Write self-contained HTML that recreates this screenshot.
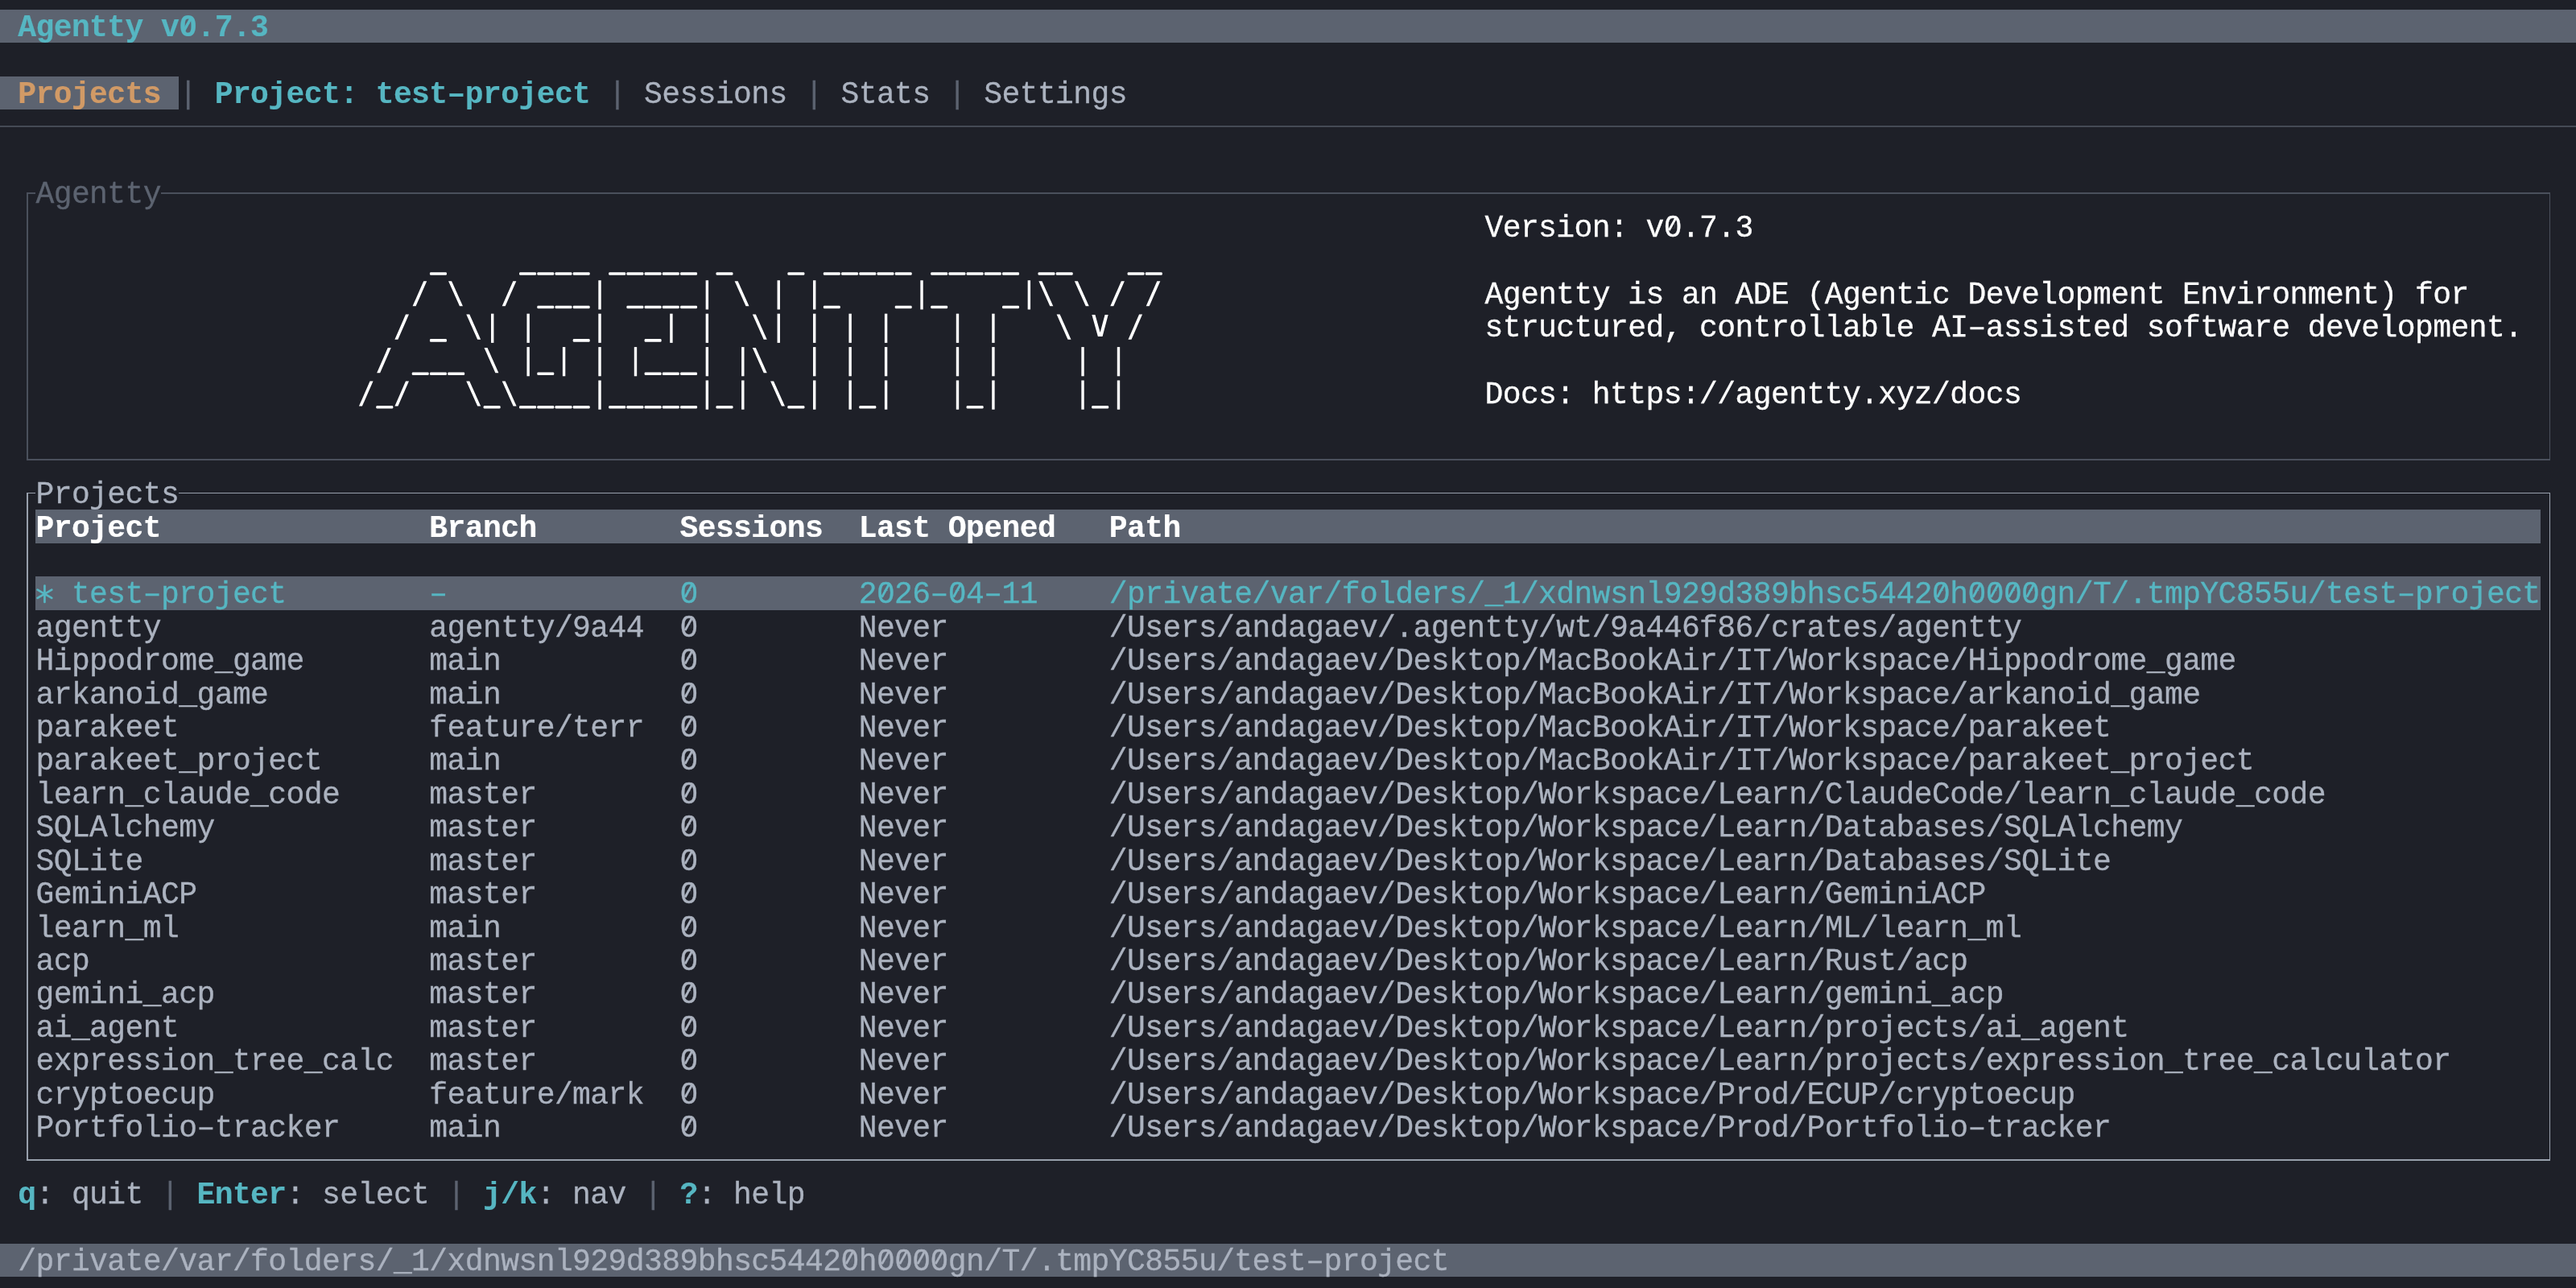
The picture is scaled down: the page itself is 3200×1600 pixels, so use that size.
<!DOCTYPE html>
<html><head><meta charset="utf-8"><style>
html,body{margin:0;padding:0;}
body{width:3200px;height:1600px;background:#1e2028;position:relative;overflow:hidden;}
#wrap{position:absolute;left:0;top:0;width:3200px;height:1600px;will-change:transform;}
.b{position:absolute;}
.t{position:absolute;white-space:pre;font-family:"Liberation Mono",monospace;font-size:38px;line-height:41.42px;height:41.42px;letter-spacing:-0.581px;}
.t{-webkit-text-stroke:0.3px currentColor;}
.bd{font-weight:bold;-webkit-text-stroke:0.2px currentColor;}
</style></head><body>
<div id="wrap">
<div class="b" style="left:0.00px;top:12.00px;width:3200.00px;height:41.42px;background:#5c6370"></div>
<div class="t bd" style="left:22.22px;top:14.20px;color:#56b6c2">Agentty v0.7.3</div>
<div class="b" style="left:0.00px;top:94.84px;width:222.22px;height:41.42px;background:#5c6370"></div>
<div class="t bd" style="left:22.22px;top:97.04px;color:#d19a66">Projects</div>
<div class="t" style="left:222.22px;top:97.04px;color:#5c6370">|</div>
<div class="t bd" style="left:266.67px;top:97.04px;color:#56b6c2">Project: test–project</div>
<div class="t" style="left:755.56px;top:97.04px;color:#5c6370">|</div>
<div class="t" style="left:800.00px;top:97.04px;color:#abb2bf">Sessions</div>
<div class="t" style="left:1000.00px;top:97.04px;color:#5c6370">|</div>
<div class="t" style="left:1044.44px;top:97.04px;color:#abb2bf">Stats</div>
<div class="t" style="left:1177.78px;top:97.04px;color:#5c6370">|</div>
<div class="t" style="left:1222.22px;top:97.04px;color:#abb2bf">Settings</div>
<div class="b" style="left:0px;top:156.12px;width:3200px;height:1.7px;background:#454a55"></div>
<div class="b" style="left:33.18px;top:239.06px;width:3134.83px;height:1.5px;background:#4a505c"></div>
<div class="b" style="left:33.18px;top:570.42px;width:3134.83px;height:1.5px;background:#4a505c"></div>
<div class="b" style="left:33.18px;top:239.81px;width:1.5px;height:332.11px;background:#4a505c"></div>
<div class="b" style="left:3166.52px;top:239.81px;width:1.5px;height:332.11px;background:#4a505c"></div>
<div class="b" style="left:44.44px;top:219.10px;width:155.56px;height:41.42px;background:#1e2028"></div>
<div class="t" style="left:44.44px;top:221.30px;color:#5c6370">Agentty</div>
<svg class="b" style="left:0;top:0" width="3200" height="1600" fill="#ffffff"><rect x="533.93" y="338.24" width="21.02" height="3.6" rx="1.3"/><rect x="645.04" y="338.24" width="21.02" height="3.6" rx="1.3"/><rect x="667.27" y="338.24" width="21.02" height="3.6" rx="1.3"/><rect x="689.49" y="338.24" width="21.02" height="3.6" rx="1.3"/><rect x="711.71" y="338.24" width="21.02" height="3.6" rx="1.3"/><rect x="756.16" y="338.24" width="21.02" height="3.6" rx="1.3"/><rect x="778.38" y="338.24" width="21.02" height="3.6" rx="1.3"/><rect x="800.60" y="338.24" width="21.02" height="3.6" rx="1.3"/><rect x="822.82" y="338.24" width="21.02" height="3.6" rx="1.3"/><rect x="845.04" y="338.24" width="21.02" height="3.6" rx="1.3"/><rect x="889.49" y="338.24" width="21.02" height="3.6" rx="1.3"/><rect x="978.38" y="338.24" width="21.02" height="3.6" rx="1.3"/><rect x="1022.82" y="338.24" width="21.02" height="3.6" rx="1.3"/><rect x="1045.04" y="338.24" width="21.02" height="3.6" rx="1.3"/><rect x="1067.27" y="338.24" width="21.02" height="3.6" rx="1.3"/><rect x="1089.49" y="338.24" width="21.02" height="3.6" rx="1.3"/><rect x="1111.71" y="338.24" width="21.02" height="3.6" rx="1.3"/><rect x="1156.16" y="338.24" width="21.02" height="3.6" rx="1.3"/><rect x="1178.38" y="338.24" width="21.02" height="3.6" rx="1.3"/><rect x="1200.60" y="338.24" width="21.02" height="3.6" rx="1.3"/><rect x="1222.82" y="338.24" width="21.02" height="3.6" rx="1.3"/><rect x="1245.04" y="338.24" width="21.02" height="3.6" rx="1.3"/><rect x="1289.49" y="338.24" width="21.02" height="3.6" rx="1.3"/><rect x="1311.71" y="338.24" width="21.02" height="3.6" rx="1.3"/><rect x="1400.60" y="338.24" width="21.02" height="3.6" rx="1.3"/><rect x="1422.82" y="338.24" width="21.02" height="3.6" rx="1.3"/><polygon points="512.61,380.36 516.61,380.36 530.21,349.16 526.21,349.16"/><polygon points="557.06,349.16 561.06,349.16 574.96,380.36 570.96,380.36"/><polygon points="623.72,380.36 627.72,380.36 641.32,349.16 637.32,349.16"/><rect x="667.27" y="379.66" width="21.02" height="3.6" rx="1.3"/><rect x="689.49" y="379.66" width="21.02" height="3.6" rx="1.3"/><rect x="711.71" y="379.66" width="21.02" height="3.6" rx="1.3"/><rect x="743.33" y="348.26" width="3.4" height="36.2"/><rect x="778.38" y="379.66" width="21.02" height="3.6" rx="1.3"/><rect x="800.60" y="379.66" width="21.02" height="3.6" rx="1.3"/><rect x="822.82" y="379.66" width="21.02" height="3.6" rx="1.3"/><rect x="845.04" y="379.66" width="21.02" height="3.6" rx="1.3"/><rect x="876.67" y="348.26" width="3.4" height="36.2"/><polygon points="912.61,349.16 916.61,349.16 930.51,380.36 926.51,380.36"/><rect x="965.56" y="348.26" width="3.4" height="36.2"/><rect x="1010.00" y="348.26" width="3.4" height="36.2"/><rect x="1022.82" y="379.66" width="21.02" height="3.6" rx="1.3"/><rect x="1111.71" y="379.66" width="21.02" height="3.6" rx="1.3"/><rect x="1143.33" y="348.26" width="3.4" height="36.2"/><rect x="1156.16" y="379.66" width="21.02" height="3.6" rx="1.3"/><rect x="1245.04" y="379.66" width="21.02" height="3.6" rx="1.3"/><rect x="1276.67" y="348.26" width="3.4" height="36.2"/><polygon points="1290.39,349.16 1294.39,349.16 1308.29,380.36 1304.29,380.36"/><polygon points="1334.83,349.16 1338.83,349.16 1352.73,380.36 1348.73,380.36"/><polygon points="1379.28,380.36 1383.28,380.36 1396.88,349.16 1392.88,349.16"/><polygon points="1423.72,380.36 1427.72,380.36 1441.32,349.16 1437.32,349.16"/><polygon points="490.39,421.78 494.39,421.78 507.99,390.58 503.99,390.58"/><rect x="533.93" y="421.08" width="21.02" height="3.6" rx="1.3"/><polygon points="579.28,390.58 583.28,390.58 597.18,421.78 593.18,421.78"/><rect x="610.00" y="389.68" width="3.4" height="36.2"/><rect x="654.44" y="389.68" width="3.4" height="36.2"/><rect x="711.71" y="421.08" width="21.02" height="3.6" rx="1.3"/><rect x="743.33" y="389.68" width="3.4" height="36.2"/><rect x="800.60" y="421.08" width="21.02" height="3.6" rx="1.3"/><rect x="832.22" y="389.68" width="3.4" height="36.2"/><rect x="876.67" y="389.68" width="3.4" height="36.2"/><polygon points="934.83,390.58 938.83,390.58 952.73,421.78 948.73,421.78"/><rect x="965.56" y="389.68" width="3.4" height="36.2"/><rect x="1010.00" y="389.68" width="3.4" height="36.2"/><rect x="1054.44" y="389.68" width="3.4" height="36.2"/><rect x="1098.89" y="389.68" width="3.4" height="36.2"/><rect x="1187.78" y="389.68" width="3.4" height="36.2"/><rect x="1232.22" y="389.68" width="3.4" height="36.2"/><polygon points="1312.61,390.58 1316.61,390.58 1330.51,421.78 1326.51,421.78"/><polygon points="1356.36,390.98 1360.46,390.98 1366.66,413.08 1372.56,390.98 1376.66,390.98 1369.56,417.88 1363.86,417.88"/><polygon points="1401.50,421.78 1405.50,421.78 1419.10,390.58 1415.10,390.58"/><polygon points="468.17,463.20 472.17,463.20 485.77,432.00 481.77,432.00"/><rect x="511.71" y="462.50" width="21.02" height="3.6" rx="1.3"/><rect x="533.93" y="462.50" width="21.02" height="3.6" rx="1.3"/><rect x="556.16" y="462.50" width="21.02" height="3.6" rx="1.3"/><polygon points="601.50,432.00 605.50,432.00 619.40,463.20 615.40,463.20"/><rect x="654.44" y="431.10" width="3.4" height="36.2"/><rect x="667.27" y="462.50" width="21.02" height="3.6" rx="1.3"/><rect x="698.89" y="431.10" width="3.4" height="36.2"/><rect x="743.33" y="431.10" width="3.4" height="36.2"/><rect x="787.78" y="431.10" width="3.4" height="36.2"/><rect x="800.60" y="462.50" width="21.02" height="3.6" rx="1.3"/><rect x="822.82" y="462.50" width="21.02" height="3.6" rx="1.3"/><rect x="845.04" y="462.50" width="21.02" height="3.6" rx="1.3"/><rect x="876.67" y="431.10" width="3.4" height="36.2"/><rect x="921.11" y="431.10" width="3.4" height="36.2"/><polygon points="934.83,432.00 938.83,432.00 952.73,463.20 948.73,463.20"/><rect x="1010.00" y="431.10" width="3.4" height="36.2"/><rect x="1054.44" y="431.10" width="3.4" height="36.2"/><rect x="1098.89" y="431.10" width="3.4" height="36.2"/><rect x="1187.78" y="431.10" width="3.4" height="36.2"/><rect x="1232.22" y="431.10" width="3.4" height="36.2"/><rect x="1343.33" y="431.10" width="3.4" height="36.2"/><rect x="1387.78" y="431.10" width="3.4" height="36.2"/><polygon points="445.94,504.62 449.94,504.62 463.54,473.42 459.54,473.42"/><rect x="467.27" y="503.92" width="21.02" height="3.6" rx="1.3"/><polygon points="490.39,504.62 494.39,504.62 507.99,473.42 503.99,473.42"/><polygon points="579.28,473.42 583.28,473.42 597.18,504.62 593.18,504.62"/><rect x="600.60" y="503.92" width="21.02" height="3.6" rx="1.3"/><polygon points="623.72,473.42 627.72,473.42 641.62,504.62 637.62,504.62"/><rect x="645.04" y="503.92" width="21.02" height="3.6" rx="1.3"/><rect x="667.27" y="503.92" width="21.02" height="3.6" rx="1.3"/><rect x="689.49" y="503.92" width="21.02" height="3.6" rx="1.3"/><rect x="711.71" y="503.92" width="21.02" height="3.6" rx="1.3"/><rect x="743.33" y="472.52" width="3.4" height="36.2"/><rect x="756.16" y="503.92" width="21.02" height="3.6" rx="1.3"/><rect x="778.38" y="503.92" width="21.02" height="3.6" rx="1.3"/><rect x="800.60" y="503.92" width="21.02" height="3.6" rx="1.3"/><rect x="822.82" y="503.92" width="21.02" height="3.6" rx="1.3"/><rect x="845.04" y="503.92" width="21.02" height="3.6" rx="1.3"/><rect x="876.67" y="472.52" width="3.4" height="36.2"/><rect x="889.49" y="503.92" width="21.02" height="3.6" rx="1.3"/><rect x="921.11" y="472.52" width="3.4" height="36.2"/><polygon points="957.06,473.42 961.06,473.42 974.96,504.62 970.96,504.62"/><rect x="978.38" y="503.92" width="21.02" height="3.6" rx="1.3"/><rect x="1010.00" y="472.52" width="3.4" height="36.2"/><rect x="1054.44" y="472.52" width="3.4" height="36.2"/><rect x="1067.27" y="503.92" width="21.02" height="3.6" rx="1.3"/><rect x="1098.89" y="472.52" width="3.4" height="36.2"/><rect x="1187.78" y="472.52" width="3.4" height="36.2"/><rect x="1200.60" y="503.92" width="21.02" height="3.6" rx="1.3"/><rect x="1232.22" y="472.52" width="3.4" height="36.2"/><rect x="1343.33" y="472.52" width="3.4" height="36.2"/><rect x="1356.16" y="503.92" width="21.02" height="3.6" rx="1.3"/><rect x="1387.78" y="472.52" width="3.4" height="36.2"/></svg>
<div class="t" style="left:1844.44px;top:262.72px;color:#ffffff">Version: v0.7.3</div>
<div class="t" style="left:1844.44px;top:345.56px;color:#ffffff">Agentty is an ADE (Agentic Development Environment) for</div>
<div class="t" style="left:1844.44px;top:386.98px;color:#ffffff">structured, controllable AI–assisted software development.</div>
<div class="t" style="left:1844.44px;top:469.82px;color:#ffffff">Docs: https://agentty.xyz/docs</div>
<div class="b" style="left:33.18px;top:611.84px;width:3134.83px;height:1.5px;background:#98a0ac"></div>
<div class="b" style="left:33.18px;top:1440.24px;width:3134.83px;height:1.5px;background:#98a0ac"></div>
<div class="b" style="left:33.18px;top:612.59px;width:1.5px;height:829.15px;background:#98a0ac"></div>
<div class="b" style="left:3166.52px;top:612.59px;width:1.5px;height:829.15px;background:#98a0ac"></div>
<div class="b" style="left:44.44px;top:591.88px;width:177.78px;height:41.42px;background:#1e2028"></div>
<div class="t" style="left:44.44px;top:594.08px;color:#abb2bf">Projects</div>
<div class="b" style="left:44.44px;top:633.30px;width:3111.11px;height:41.42px;background:#5c6370"></div>
<div class="t bd" style="left:44.44px;top:635.50px;color:#ffffff">Project</div>
<div class="t bd" style="left:533.33px;top:635.50px;color:#ffffff">Branch</div>
<div class="t bd" style="left:844.44px;top:635.50px;color:#ffffff">Sessions</div>
<div class="t bd" style="left:1066.67px;top:635.50px;color:#ffffff">Last Opened</div>
<div class="t bd" style="left:1377.78px;top:635.50px;color:#ffffff">Path</div>
<div class="b" style="left:44.44px;top:716.14px;width:3111.11px;height:41.42px;background:#5c6370"></div>
<div class="t" style="left:44.44px;top:718.34px;color:#56b6c2">  test–project</div>
<div class="t" style="left:533.33px;top:718.34px;color:#56b6c2">–</div>
<div class="t" style="left:844.44px;top:718.34px;color:#56b6c2">0</div>
<div class="t" style="left:1066.67px;top:718.34px;color:#56b6c2">2026–04–11</div>
<div class="t" style="left:1377.78px;top:718.34px;color:#56b6c2">/private/var/folders/_1/xdnwsnl929d389bhsc54420h0000gn/T/.tmpYC855u/test–project</div>
<div class="t" style="left:44.44px;top:759.76px;color:#abb2bf">agentty</div>
<div class="t" style="left:533.33px;top:759.76px;color:#abb2bf">agentty/9a44</div>
<div class="t" style="left:844.44px;top:759.76px;color:#abb2bf">0</div>
<div class="t" style="left:1066.67px;top:759.76px;color:#abb2bf">Never</div>
<div class="t" style="left:1377.78px;top:759.76px;color:#abb2bf">/Users/andagaev/.agentty/wt/9a446f86/crates/agentty</div>
<div class="t" style="left:44.44px;top:801.18px;color:#abb2bf">Hippodrome_game</div>
<div class="t" style="left:533.33px;top:801.18px;color:#abb2bf">main</div>
<div class="t" style="left:844.44px;top:801.18px;color:#abb2bf">0</div>
<div class="t" style="left:1066.67px;top:801.18px;color:#abb2bf">Never</div>
<div class="t" style="left:1377.78px;top:801.18px;color:#abb2bf">/Users/andagaev/Desktop/MacBookAir/IT/Workspace/Hippodrome_game</div>
<div class="t" style="left:44.44px;top:842.60px;color:#abb2bf">arkanoid_game</div>
<div class="t" style="left:533.33px;top:842.60px;color:#abb2bf">main</div>
<div class="t" style="left:844.44px;top:842.60px;color:#abb2bf">0</div>
<div class="t" style="left:1066.67px;top:842.60px;color:#abb2bf">Never</div>
<div class="t" style="left:1377.78px;top:842.60px;color:#abb2bf">/Users/andagaev/Desktop/MacBookAir/IT/Workspace/arkanoid_game</div>
<div class="t" style="left:44.44px;top:884.02px;color:#abb2bf">parakeet</div>
<div class="t" style="left:533.33px;top:884.02px;color:#abb2bf">feature/terr</div>
<div class="t" style="left:844.44px;top:884.02px;color:#abb2bf">0</div>
<div class="t" style="left:1066.67px;top:884.02px;color:#abb2bf">Never</div>
<div class="t" style="left:1377.78px;top:884.02px;color:#abb2bf">/Users/andagaev/Desktop/MacBookAir/IT/Workspace/parakeet</div>
<div class="t" style="left:44.44px;top:925.44px;color:#abb2bf">parakeet_project</div>
<div class="t" style="left:533.33px;top:925.44px;color:#abb2bf">main</div>
<div class="t" style="left:844.44px;top:925.44px;color:#abb2bf">0</div>
<div class="t" style="left:1066.67px;top:925.44px;color:#abb2bf">Never</div>
<div class="t" style="left:1377.78px;top:925.44px;color:#abb2bf">/Users/andagaev/Desktop/MacBookAir/IT/Workspace/parakeet_project</div>
<div class="t" style="left:44.44px;top:966.86px;color:#abb2bf">learn_claude_code</div>
<div class="t" style="left:533.33px;top:966.86px;color:#abb2bf">master</div>
<div class="t" style="left:844.44px;top:966.86px;color:#abb2bf">0</div>
<div class="t" style="left:1066.67px;top:966.86px;color:#abb2bf">Never</div>
<div class="t" style="left:1377.78px;top:966.86px;color:#abb2bf">/Users/andagaev/Desktop/Workspace/Learn/ClaudeCode/learn_claude_code</div>
<div class="t" style="left:44.44px;top:1008.28px;color:#abb2bf">SQLAlchemy</div>
<div class="t" style="left:533.33px;top:1008.28px;color:#abb2bf">master</div>
<div class="t" style="left:844.44px;top:1008.28px;color:#abb2bf">0</div>
<div class="t" style="left:1066.67px;top:1008.28px;color:#abb2bf">Never</div>
<div class="t" style="left:1377.78px;top:1008.28px;color:#abb2bf">/Users/andagaev/Desktop/Workspace/Learn/Databases/SQLAlchemy</div>
<div class="t" style="left:44.44px;top:1049.70px;color:#abb2bf">SQLite</div>
<div class="t" style="left:533.33px;top:1049.70px;color:#abb2bf">master</div>
<div class="t" style="left:844.44px;top:1049.70px;color:#abb2bf">0</div>
<div class="t" style="left:1066.67px;top:1049.70px;color:#abb2bf">Never</div>
<div class="t" style="left:1377.78px;top:1049.70px;color:#abb2bf">/Users/andagaev/Desktop/Workspace/Learn/Databases/SQLite</div>
<div class="t" style="left:44.44px;top:1091.12px;color:#abb2bf">GeminiACP</div>
<div class="t" style="left:533.33px;top:1091.12px;color:#abb2bf">master</div>
<div class="t" style="left:844.44px;top:1091.12px;color:#abb2bf">0</div>
<div class="t" style="left:1066.67px;top:1091.12px;color:#abb2bf">Never</div>
<div class="t" style="left:1377.78px;top:1091.12px;color:#abb2bf">/Users/andagaev/Desktop/Workspace/Learn/GeminiACP</div>
<div class="t" style="left:44.44px;top:1132.54px;color:#abb2bf">learn_ml</div>
<div class="t" style="left:533.33px;top:1132.54px;color:#abb2bf">main</div>
<div class="t" style="left:844.44px;top:1132.54px;color:#abb2bf">0</div>
<div class="t" style="left:1066.67px;top:1132.54px;color:#abb2bf">Never</div>
<div class="t" style="left:1377.78px;top:1132.54px;color:#abb2bf">/Users/andagaev/Desktop/Workspace/Learn/ML/learn_ml</div>
<div class="t" style="left:44.44px;top:1173.96px;color:#abb2bf">acp</div>
<div class="t" style="left:533.33px;top:1173.96px;color:#abb2bf">master</div>
<div class="t" style="left:844.44px;top:1173.96px;color:#abb2bf">0</div>
<div class="t" style="left:1066.67px;top:1173.96px;color:#abb2bf">Never</div>
<div class="t" style="left:1377.78px;top:1173.96px;color:#abb2bf">/Users/andagaev/Desktop/Workspace/Learn/Rust/acp</div>
<div class="t" style="left:44.44px;top:1215.38px;color:#abb2bf">gemini_acp</div>
<div class="t" style="left:533.33px;top:1215.38px;color:#abb2bf">master</div>
<div class="t" style="left:844.44px;top:1215.38px;color:#abb2bf">0</div>
<div class="t" style="left:1066.67px;top:1215.38px;color:#abb2bf">Never</div>
<div class="t" style="left:1377.78px;top:1215.38px;color:#abb2bf">/Users/andagaev/Desktop/Workspace/Learn/gemini_acp</div>
<div class="t" style="left:44.44px;top:1256.80px;color:#abb2bf">ai_agent</div>
<div class="t" style="left:533.33px;top:1256.80px;color:#abb2bf">master</div>
<div class="t" style="left:844.44px;top:1256.80px;color:#abb2bf">0</div>
<div class="t" style="left:1066.67px;top:1256.80px;color:#abb2bf">Never</div>
<div class="t" style="left:1377.78px;top:1256.80px;color:#abb2bf">/Users/andagaev/Desktop/Workspace/Learn/projects/ai_agent</div>
<div class="t" style="left:44.44px;top:1298.22px;color:#abb2bf">expression_tree_calc</div>
<div class="t" style="left:533.33px;top:1298.22px;color:#abb2bf">master</div>
<div class="t" style="left:844.44px;top:1298.22px;color:#abb2bf">0</div>
<div class="t" style="left:1066.67px;top:1298.22px;color:#abb2bf">Never</div>
<div class="t" style="left:1377.78px;top:1298.22px;color:#abb2bf">/Users/andagaev/Desktop/Workspace/Learn/projects/expression_tree_calculator</div>
<div class="t" style="left:44.44px;top:1339.64px;color:#abb2bf">cryptoecup</div>
<div class="t" style="left:533.33px;top:1339.64px;color:#abb2bf">feature/mark</div>
<div class="t" style="left:844.44px;top:1339.64px;color:#abb2bf">0</div>
<div class="t" style="left:1066.67px;top:1339.64px;color:#abb2bf">Never</div>
<div class="t" style="left:1377.78px;top:1339.64px;color:#abb2bf">/Users/andagaev/Desktop/Workspace/Prod/ECUP/cryptoecup</div>
<div class="t" style="left:44.44px;top:1381.06px;color:#abb2bf">Portfolio–tracker</div>
<div class="t" style="left:533.33px;top:1381.06px;color:#abb2bf">main</div>
<div class="t" style="left:844.44px;top:1381.06px;color:#abb2bf">0</div>
<div class="t" style="left:1066.67px;top:1381.06px;color:#abb2bf">Never</div>
<div class="t" style="left:1377.78px;top:1381.06px;color:#abb2bf">/Users/andagaev/Desktop/Workspace/Prod/Portfolio–tracker</div>
<div class="t bd" style="left:22.22px;top:1463.90px;color:#56b6c2">q</div>
<div class="t" style="left:44.44px;top:1463.90px;color:#abb2bf">: quit</div>
<div class="t" style="left:200.00px;top:1463.90px;color:#5c6370">|</div>
<div class="t bd" style="left:244.44px;top:1463.90px;color:#56b6c2">Enter</div>
<div class="t" style="left:355.56px;top:1463.90px;color:#abb2bf">: select</div>
<div class="t" style="left:555.56px;top:1463.90px;color:#5c6370">|</div>
<div class="t bd" style="left:600.00px;top:1463.90px;color:#56b6c2">j/k</div>
<div class="t" style="left:666.67px;top:1463.90px;color:#abb2bf">: nav</div>
<div class="t" style="left:800.00px;top:1463.90px;color:#5c6370">|</div>
<div class="t bd" style="left:844.44px;top:1463.90px;color:#56b6c2">?</div>
<div class="t" style="left:866.67px;top:1463.90px;color:#abb2bf">: help</div>
<div class="b" style="left:0.00px;top:1544.54px;width:3200.00px;height:41.42px;background:#5c6370"></div>
<div class="t" style="left:22.22px;top:1546.74px;color:#abb2bf">/private/var/folders/_1/xdnwsnl929d389bhsc54420h0000gn/T/.tmpYC855u/test–project</div>
<svg class="b" style="left:0;top:0" width="3200" height="1600"><rect x="230.92" y="29.60" width="5.4" height="5.6" fill="#5c6370"/><line x1="228.82" y1="37.60" x2="237.82" y2="21.40" stroke="#56b6c2" stroke-width="3.4"/><rect x="2075.37" y="278.12" width="5.4" height="5.6" fill="#1e2028"/><line x1="2073.27" y1="286.12" x2="2082.27" y2="269.92" stroke="#ffffff" stroke-width="2.9"/><line x1="55.44" y1="727.54" x2="55.44" y2="747.94" stroke="#56b6c2" stroke-width="2.7" stroke-linecap="round"/><line x1="46.61" y1="732.64" x2="64.28" y2="742.84" stroke="#56b6c2" stroke-width="2.7" stroke-linecap="round"/><line x1="64.28" y1="732.64" x2="46.61" y2="742.84" stroke="#56b6c2" stroke-width="2.7" stroke-linecap="round"/><rect x="853.14" y="733.74" width="5.4" height="5.6" fill="#5c6370"/><line x1="851.04" y1="741.74" x2="860.04" y2="725.54" stroke="#56b6c2" stroke-width="2.9"/><rect x="1097.59" y="733.74" width="5.4" height="5.6" fill="#5c6370"/><line x1="1095.49" y1="741.74" x2="1104.49" y2="725.54" stroke="#56b6c2" stroke-width="2.9"/><rect x="1186.48" y="733.74" width="5.4" height="5.6" fill="#5c6370"/><line x1="1184.38" y1="741.74" x2="1193.38" y2="725.54" stroke="#56b6c2" stroke-width="2.9"/><rect x="2408.70" y="733.74" width="5.4" height="5.6" fill="#5c6370"/><line x1="2406.60" y1="741.74" x2="2415.60" y2="725.54" stroke="#56b6c2" stroke-width="2.9"/><rect x="2453.14" y="733.74" width="5.4" height="5.6" fill="#5c6370"/><line x1="2451.04" y1="741.74" x2="2460.04" y2="725.54" stroke="#56b6c2" stroke-width="2.9"/><rect x="2475.37" y="733.74" width="5.4" height="5.6" fill="#5c6370"/><line x1="2473.27" y1="741.74" x2="2482.27" y2="725.54" stroke="#56b6c2" stroke-width="2.9"/><rect x="2497.59" y="733.74" width="5.4" height="5.6" fill="#5c6370"/><line x1="2495.49" y1="741.74" x2="2504.49" y2="725.54" stroke="#56b6c2" stroke-width="2.9"/><rect x="2519.81" y="733.74" width="5.4" height="5.6" fill="#5c6370"/><line x1="2517.71" y1="741.74" x2="2526.71" y2="725.54" stroke="#56b6c2" stroke-width="2.9"/><rect x="853.14" y="775.16" width="5.4" height="5.6" fill="#1e2028"/><line x1="851.04" y1="783.16" x2="860.04" y2="766.96" stroke="#abb2bf" stroke-width="2.9"/><rect x="853.14" y="816.58" width="5.4" height="5.6" fill="#1e2028"/><line x1="851.04" y1="824.58" x2="860.04" y2="808.38" stroke="#abb2bf" stroke-width="2.9"/><rect x="853.14" y="858.00" width="5.4" height="5.6" fill="#1e2028"/><line x1="851.04" y1="866.00" x2="860.04" y2="849.80" stroke="#abb2bf" stroke-width="2.9"/><rect x="853.14" y="899.42" width="5.4" height="5.6" fill="#1e2028"/><line x1="851.04" y1="907.42" x2="860.04" y2="891.22" stroke="#abb2bf" stroke-width="2.9"/><rect x="853.14" y="940.84" width="5.4" height="5.6" fill="#1e2028"/><line x1="851.04" y1="948.84" x2="860.04" y2="932.64" stroke="#abb2bf" stroke-width="2.9"/><rect x="853.14" y="982.26" width="5.4" height="5.6" fill="#1e2028"/><line x1="851.04" y1="990.26" x2="860.04" y2="974.06" stroke="#abb2bf" stroke-width="2.9"/><rect x="853.14" y="1023.68" width="5.4" height="5.6" fill="#1e2028"/><line x1="851.04" y1="1031.68" x2="860.04" y2="1015.48" stroke="#abb2bf" stroke-width="2.9"/><rect x="853.14" y="1065.10" width="5.4" height="5.6" fill="#1e2028"/><line x1="851.04" y1="1073.10" x2="860.04" y2="1056.90" stroke="#abb2bf" stroke-width="2.9"/><rect x="853.14" y="1106.52" width="5.4" height="5.6" fill="#1e2028"/><line x1="851.04" y1="1114.52" x2="860.04" y2="1098.32" stroke="#abb2bf" stroke-width="2.9"/><rect x="853.14" y="1147.94" width="5.4" height="5.6" fill="#1e2028"/><line x1="851.04" y1="1155.94" x2="860.04" y2="1139.74" stroke="#abb2bf" stroke-width="2.9"/><rect x="853.14" y="1189.36" width="5.4" height="5.6" fill="#1e2028"/><line x1="851.04" y1="1197.36" x2="860.04" y2="1181.16" stroke="#abb2bf" stroke-width="2.9"/><rect x="853.14" y="1230.78" width="5.4" height="5.6" fill="#1e2028"/><line x1="851.04" y1="1238.78" x2="860.04" y2="1222.58" stroke="#abb2bf" stroke-width="2.9"/><rect x="853.14" y="1272.20" width="5.4" height="5.6" fill="#1e2028"/><line x1="851.04" y1="1280.20" x2="860.04" y2="1264.00" stroke="#abb2bf" stroke-width="2.9"/><rect x="853.14" y="1313.62" width="5.4" height="5.6" fill="#1e2028"/><line x1="851.04" y1="1321.62" x2="860.04" y2="1305.42" stroke="#abb2bf" stroke-width="2.9"/><rect x="853.14" y="1355.04" width="5.4" height="5.6" fill="#1e2028"/><line x1="851.04" y1="1363.04" x2="860.04" y2="1346.84" stroke="#abb2bf" stroke-width="2.9"/><rect x="853.14" y="1396.46" width="5.4" height="5.6" fill="#1e2028"/><line x1="851.04" y1="1404.46" x2="860.04" y2="1388.26" stroke="#abb2bf" stroke-width="2.9"/><rect x="1053.14" y="1562.14" width="5.4" height="5.6" fill="#5c6370"/><line x1="1051.04" y1="1570.14" x2="1060.04" y2="1553.94" stroke="#abb2bf" stroke-width="2.9"/><rect x="1097.59" y="1562.14" width="5.4" height="5.6" fill="#5c6370"/><line x1="1095.49" y1="1570.14" x2="1104.49" y2="1553.94" stroke="#abb2bf" stroke-width="2.9"/><rect x="1119.81" y="1562.14" width="5.4" height="5.6" fill="#5c6370"/><line x1="1117.71" y1="1570.14" x2="1126.71" y2="1553.94" stroke="#abb2bf" stroke-width="2.9"/><rect x="1142.03" y="1562.14" width="5.4" height="5.6" fill="#5c6370"/><line x1="1139.93" y1="1570.14" x2="1148.93" y2="1553.94" stroke="#abb2bf" stroke-width="2.9"/><rect x="1164.26" y="1562.14" width="5.4" height="5.6" fill="#5c6370"/><line x1="1162.16" y1="1570.14" x2="1171.16" y2="1553.94" stroke="#abb2bf" stroke-width="2.9"/></svg>
</div>
</body></html>
